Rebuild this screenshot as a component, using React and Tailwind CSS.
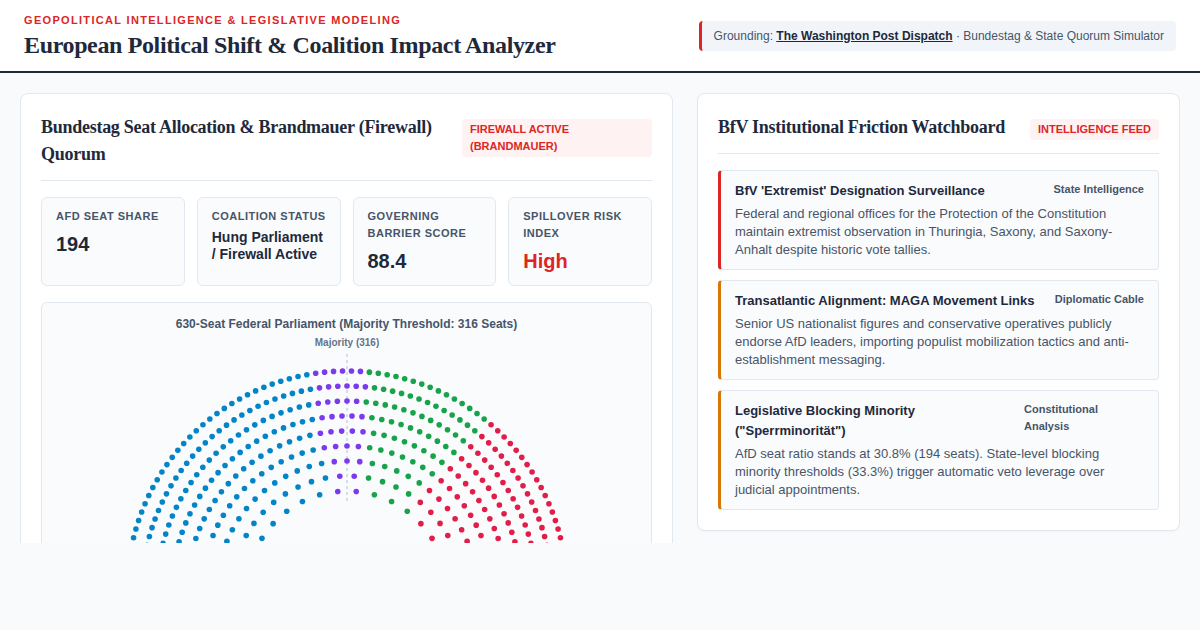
const rows = [100, 115, 130, 145, 160, 175, 190, 205, 220]
const counts = [18, 26, 33, 41, 48, 56, 63, 71, 78]
const parties = [
  { n: 194, color: '#0284c7' },
  { n: 38, color: '#7c3aed' },
  { n: 77, color: '#16a34a' },
  { n: 125, color: '#e11d48' },
]

// seats sorted left to right by angle, then coloured by party count
function buildSeats() {
  const seats = []
  rows.forEach((r, i) => {
    const n = counts[i]
    for (let s = 0; s < n; s++) {
      const a = Math.PI - (s / (n - 1)) * Math.PI
      seats.push({ a, x: 305 + r * Math.cos(a), y: 260 - r * Math.sin(a) })
    }
  })
  seats.sort((p, q) => q.a - p.a)
  let k = 0
  parties.forEach(p => {
    for (let j = 0; j < p.n; j++) seats[k++].color = p.color
  })
  return seats
}

const stats = [
  { label: 'AfD Seat Share', value: '194', cls: 'text-xl leading-[30px] text-[#1e293b]' },
  { label: 'Coalition Status', value: 'Hung Parliament / Firewall Active', cls: 'text-sm leading-[17px] text-[#1e293b]' },
  { label: 'Governing Barrier Score', value: '88.4', cls: 'text-xl leading-[30px] text-[#1e293b]' },
  { label: 'Spillover Risk Index', value: 'High', cls: 'text-xl leading-[30px] text-[#dc2626]' },
]

const feed = [
  {
    title: "BfV 'Extremist' Designation Surveillance",
    tag: 'State Intelligence',
    text: 'Federal and regional offices for the Protection of the Constitution maintain extremist observation in Thuringia, Saxony, and Saxony-Anhalt despite historic vote tallies.',
    border: 'border-l-[#dc2626]',
    tagCls: '',
  },
  {
    title: 'Transatlantic Alignment: MAGA Movement Links',
    tag: 'Diplomatic Cable',
    text: 'Senior US nationalist figures and conservative operatives publicly endorse AfD leaders, importing populist mobilization tactics and anti-establishment messaging.',
    border: 'border-l-[#d97706]',
    tagCls: '',
  },
  {
    title: 'Legislative Blocking Minority ("Sperrminorität")',
    tag: 'Constitutional Analysis',
    text: 'AfD seat ratio stands at 30.8% (194 seats). State-level blocking minority thresholds (33.3%) trigger automatic veto leverage over judicial appointments.',
    border: 'border-l-[#d97706]',
    tagCls: 'w-[120px]',
  },
]

const serif = "font-['Liberation_Serif',serif]"

export default function App() {
  const seats = buildSeats()

  return (
    <div className="min-h-[630px] bg-[#f8fafc] font-['Liberation_Sans',sans-serif] text-[#1e293b]">
      <header className="flex items-center justify-between h-[73px] bg-white border-b-2 border-[#1e293b] px-6">
        <div className="pt-[3px]">
          <div className="text-[11px] leading-[13px] font-bold tracking-[1.32px] uppercase text-[#dc2626]">
            Geopolitical Intelligence &amp; Legislative Modeling
          </div>
          <h1 className={`${serif} mt-[3px] text-2xl leading-[30px] font-bold tracking-[-0.36px]`}>
            European Political Shift &amp; Coalition Impact Analyzer
          </h1>
        </div>
        <div className="bg-[#f1f5f9] border-l-[3px] border-[#dc2626] rounded px-3 py-2 text-xs leading-[14px] text-[#475569]">
          Grounding: <span className="font-bold underline text-[#1e293b]">The Washington Post Dispatch</span> · Bundestag &amp; State Quorum Simulator
        </div>
      </header>

      <main className="grid grid-cols-[1.35fr_1fr] items-start gap-6 h-[450px] mx-5 mt-5 overflow-hidden">
        <section className="bg-white border border-[#e2e8f0] rounded-lg p-5 pb-0">
          <div className="flex justify-between items-start gap-4 pb-3 mb-4 border-b border-[#e2e8f0]">
            <h2 className={`${serif} text-lg leading-[27px] font-bold tracking-[-0.27px]`}>
              Bundestag Seat Allocation &amp; Brandmauer (Firewall) Quorum
            </h2>
            <span className="shrink-0 mt-[5px] w-[190px] bg-[#fef2f2] rounded px-2 py-[2px] text-[11px] leading-[17px] font-bold uppercase text-[#dc2626]">
              Firewall Active (Brandmauer)
            </span>
          </div>

          <div className="grid grid-cols-4 gap-3 mb-4">
            {stats.map(s => (
              <div key={s.label} className="bg-[#fafbfd] border border-[#e2e8f0] rounded-md pl-[14px] pr-3 py-[10px] h-[89px]">
                <div className="text-[11px] leading-[17px] font-bold tracking-[0.5px] uppercase text-[#475569]">{s.label}</div>
                <div className={`mt-1 font-bold ${s.cls}`}>{s.value}</div>
              </div>
            ))}
          </div>

          <div className="bg-[#fafbfd] border border-[#e2e8f0] rounded-md">
            <div className="pt-[14px] text-center text-xs leading-[14px] font-bold text-[#475569]">
              630-Seat Federal Parliament (Majority Threshold: 316 Seats)
            </div>
            <svg width="609" height="300" viewBox="0 0 609 300" className="block">
              <text x="305" y="15" textAnchor="middle" fontSize="10" fontWeight="700" fill="#64748b">Majority (316)</text>
              <line x1="305" y1="23" x2="305" y2="170" stroke="#cbd5e1" strokeWidth="1.5" strokeDasharray="3 3" />
              {seats.map((s, i) => (
                <circle key={i} cx={s.x} cy={s.y} r="2.8" fill={s.color} />
              ))}
            </svg>
          </div>
        </section>

        <section className="bg-white border border-[#e2e8f0] rounded-lg p-5 shadow-[0_1px_2px_rgba(0,0,0,0.03)]">
          <div className="flex justify-between items-start gap-4 pb-3 mb-4 border-b border-[#e2e8f0]">
            <h2 className={`${serif} text-lg leading-[27px] font-bold tracking-[-0.27px]`}>BfV Institutional Friction Watchboard</h2>
            <span className="shrink-0 mt-[5px] bg-[#fef2f2] rounded px-2 py-[2px] text-[11px] leading-[17px] font-bold uppercase text-[#dc2626]">
              Intelligence Feed
            </span>
          </div>

          <div className="flex flex-col gap-[10px]">
            {feed.map(f => (
              <div key={f.tag} className={`bg-[#fafbfd] border border-[#e2e8f0] border-l-[3px] ${f.border} rounded px-[14px] py-[10px]`}>
                <div className="flex justify-between items-start gap-[15px] mb-1">
                  <div className="text-[13px] leading-[20px] font-bold">{f.title}</div>
                  <div className={`shrink-0 text-[11px] leading-[17px] font-bold text-[#475569] ${f.tagCls}`}>{f.tag}</div>
                </div>
                <p className="text-[13px] leading-[18px] text-[#475569]">{f.text}</p>
              </div>
            ))}
          </div>
        </section>
      </main>
    </div>
  )
}
